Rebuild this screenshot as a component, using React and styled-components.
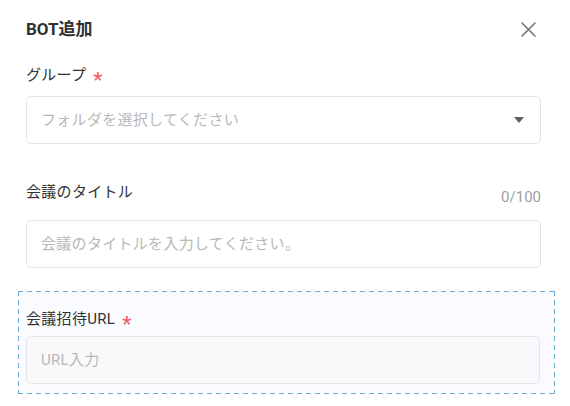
import React from "react";
import styled, { createGlobalStyle } from "styled-components";

const GlobalStyle = createGlobalStyle`
  html, body {
    margin: 0;
    padding: 0;
    background: #ffffff;
  }
  body {
    font-family: Roboto, "Noto Sans CJK JP", "Noto Sans", sans-serif;
    color: #333333;
    -webkit-font-smoothing: antialiased;
  }
  * { box-sizing: border-box; }
`;

const Dialog = styled.div`
  width: 570px;
  height: 406px;
  padding: 16px 29px 0 26px;
  background: #ffffff;
  overflow: hidden;
`;

const Header = styled.div`
  display: flex;
  align-items: center;
  justify-content: space-between;
  height: 26px;
`;

const Title = styled.h2`
  margin: 0;
  font-size: 17px;
  line-height: 26px;
  font-weight: 700;
  color: #303133;
`;

const CloseButton = styled.button`
  display: flex;
  align-items: center;
  justify-content: center;
  width: 20px;
  height: 20px;
  margin-right: 3px;
  padding: 0;
  border: 0;
  background: transparent;
  color: #757575;
  cursor: pointer;
`;

const Field = styled.div`
  margin-top: ${(p) => p.$gap}px;
`;

const LabelRow = styled.div`
  display: flex;
  justify-content: space-between;
  align-items: flex-end;
  margin-bottom: ${(p) => p.$space}px;
`;

const Label = styled.label`
  font-size: 15px;
  line-height: 22px;
  letter-spacing: 0.3px;
  color: #333333;
  padding-bottom: ${(p) => p.$lift || 0}px;
`;

const Required = styled.span`
  color: #f26464;
  margin-left: 7px;
  font-size: 20px;
  font-weight: 700;
  vertical-align: -7px;
  line-height: 0;
`;

const Counter = styled.span`
  font-size: 15px;
  line-height: 22px;
  color: #a0a0a0;
`;

const Control = styled.div`
  position: relative;
  display: flex;
  align-items: center;
  height: 48px;
  padding: 0 14px;
  border: 1px solid #e3e5e9;
  border-radius: 5px;
  background: ${(p) => (p.$muted ? "#f8f9fb" : "#ffffff")};
`;

const TextInput = styled.input`
  flex: 1;
  min-width: 0;
  border: 0;
  outline: none;
  background: transparent;
  font-family: inherit;
  font-size: 15px;
  letter-spacing: 0.3px;
  color: #333333;
  padding: 0;
  &::placeholder {
    color: #b8b8b8;
  }
`;

const Caret = styled.span`
  width: 0;
  height: 0;
  margin-right: 2px;
  border-left: 5.5px solid transparent;
  border-right: 5.5px solid transparent;
  border-top: 6px solid #5f5f5f;
`;

/* dashed frame drawn with gradients so the dash length can be set */
const dashH = "repeating-linear-gradient(90deg, #6aaed6 0 5px, transparent 5px 9px)";
const dashV = "repeating-linear-gradient(180deg, #6aaed6 0 5px, transparent 5px 9px)";

const Highlight = styled.div`
  margin: 23px -14px 0 -8px;
  padding: 17px 15px 10px 8px;
  background:
    ${dashH} top left / 100% 1px no-repeat,
    ${dashH} bottom left / 100% 1px no-repeat,
    ${dashV} top left / 1px 100% no-repeat,
    ${dashV} top right / 1px 100% no-repeat,
    #fafbfe;
`;

export default function App() {
  return (
    <>
      <GlobalStyle />
      <Dialog>
        <Header>
          <Title>BOT追加</Title>
          <CloseButton aria-label="close">
            <svg width="15" height="15" viewBox="0 0 15 15">
              <path
                d="M1 1 L14 14 M14 1 L1 14"
                stroke="currentColor"
                strokeWidth="1.6"
                strokeLinecap="round"
              />
            </svg>
          </CloseButton>
        </Header>

        <Field $gap={22}>
          <LabelRow $space={10}>
            <Label>
              グループ<Required>*</Required>
            </Label>
          </LabelRow>
          <Control>
            <TextInput placeholder="フォルダを選択してください" readOnly />
            <Caret />
          </Control>
        </Field>

        <Field $gap={37}>
          <LabelRow $space={12}>
            <Label $lift={5}>会議のタイトル</Label>
            <Counter>0/100</Counter>
          </LabelRow>
          <Control>
            <TextInput placeholder="会議のタイトルを入力してください。" />
          </Control>
        </Field>

        <Highlight>
          <LabelRow $space={6}>
            <Label>
              会議招待URL<Required>*</Required>
            </Label>
          </LabelRow>
          <Control $muted>
            <TextInput placeholder="URL入力" />
          </Control>
        </Highlight>
      </Dialog>
    </>
  );
}
